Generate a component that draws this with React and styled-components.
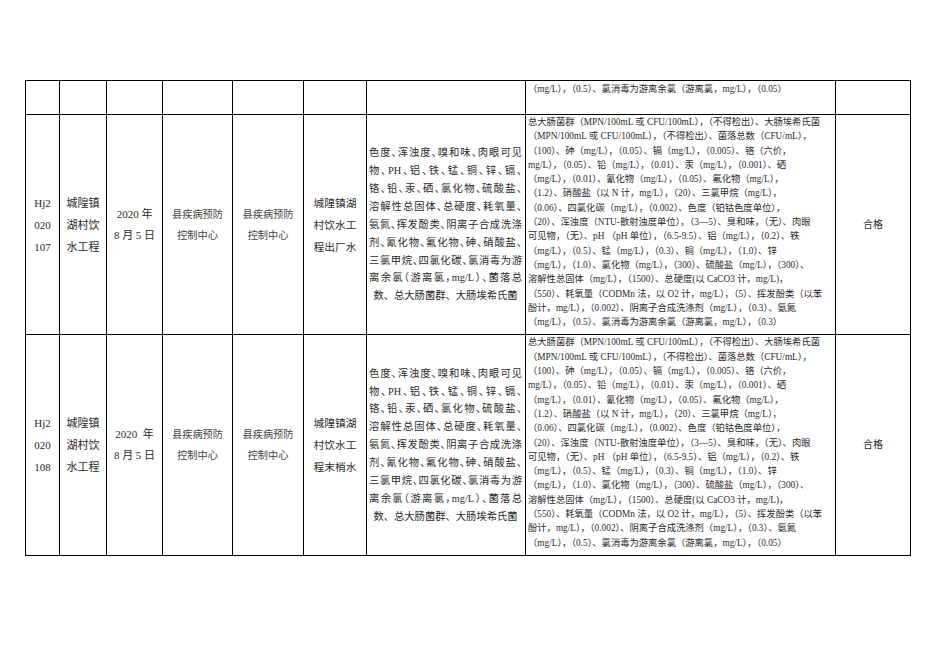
import React from 'react';
import styled, { createGlobalStyle } from 'styled-components';

const GlobalStyle = createGlobalStyle`
  html, body {
    margin: 0;
    background: #fff;
  }
  body {
    font-family: "Liberation Serif", "Noto Sans CJK SC", serif;
    color: #2a2a2a;
  }
`;

const Page = styled.div`
  width: 936px;
  height: 662px;
  box-sizing: border-box;
  padding: 80px 0 0 25px;
  overflow: hidden;
`;

const Table = styled.table`
  border-collapse: collapse;
  table-layout: fixed;
  width: 886px;
`;

const Row = styled.tr`
  height: ${({ $h }) => $h}px;
`;

const Cell = styled.td`
  border: 1px solid #000;
  padding: 0 2px;
  vertical-align: ${({ $top }) => ($top ? 'top' : 'middle')};
  text-align: center;
  font-size: 11px;
  line-height: 22px;
  overflow: hidden;
`;

const ShortCell = styled(Cell)`
  line-height: 21px;
`;

const OrgCell = styled(Cell)`
  font-size: 10.2px;
  line-height: 21px;
  color: #444;
`;

const SiteCell = styled(Cell)`
  font-size: 10.7px;
  line-height: 22px;
`;

const ItemsCell = styled(Cell)`
  font-size: 10.3px;
  line-height: 17.9px;
  padding: 0 3px 0 2px;
`;

const LimitsCell = styled(Cell)`
  text-align: left;
  font-size: 9.3px;
  line-height: 14.3px;
  padding: ${({ $top }) => ($top ? '1px 2px 0' : '0 2px 5px')};
`;

const ResultCell = styled(Cell)`
  font-size: 10px;
`;

const Line = styled.span`
  display: block;
  white-space: nowrap;
`;

const ItemLine = styled.span`
  display: block;
  white-space: nowrap;
  font-feature-settings: ${({ $last }) => ($last ? 'normal' : '"halt" 1')};
  text-align: ${({ $last }) => ($last ? 'center' : 'justify')};
  text-align-last: ${({ $last }) => ($last ? 'center' : 'justify')};
  text-justify: inter-character;
`;

const items = [
  '色度、浑浊度、嗅和味、肉眼可见',
  '物、PH、铝、铁、锰、铜、锌、镉、',
  '铬、铅、汞、硒、氯化物、硫酸盐、',
  '溶解性总固体、总硬度、耗氧量、',
  '氨氮、挥发酚类、阴离子合成洗涤',
  '剂、氰化物、氟化物、砷、硝酸盐、',
  '三氯甲烷、四氯化碳、氯消毒为游',
  '离余氯（游离氯，mg/L）、菌落总',
  '数、总大肠菌群、大肠埃希氏菌',
];

const limits = (last) => [
  '总大肠菌群（MPN/100mL 或 CFU/100mL），（不得检出）、大肠埃希氏菌',
  '（MPN/100mL 或 CFU/100mL），（不得检出）、菌落总数（CFU/mL），',
  '（100）、砷（mg/L），（0.05）、镉（mg/L），（0.005）、铬（六价，',
  'mg/L），（0.05）、铅（mg/L），（0.01）、汞（mg/L），（0.001）、硒',
  '（mg/L），（0.01）、氰化物（mg/L），（0.05）、氟化物（mg/L），',
  '（1.2）、硝酸盐（以 N 计，mg/L），（20）、三氯甲烷（mg/L），',
  '（0.06）、四氯化碳（mg/L），（0.002）、色度（铂钴色度单位），',
  '（20）、浑浊度（NTU-散射浊度单位），（3—5）、臭和味，（无）、肉眼',
  '可见物，（无）、pH （pH 单位），（6.5-9.5）、铝（mg/L），（0.2）、铁',
  '（mg/L），（0.5）、锰（mg/L），（0.3）、铜（mg/L），（1.0）、锌',
  '（mg/L），（1.0）、氯化物（mg/L），（300）、硫酸盐（mg/L），（300）、',
  '溶解性总固体（mg/L），（1500）、总硬度(以 CaCO3 计，mg/L)，',
  '（550）、耗氧量（CODMn 法，以 O2 计，mg/L），（5）、挥发酚类（以苯',
  '酚计，mg/L），（0.002）、阴离子合成洗涤剂（mg/L），（0.3）、氨氮',
  `（mg/L），（0.5）、氯消毒为游离余氯（游离氯，mg/L），（${last}）`,
];

const records = [
  {
    code: ['Hj2', '020', '107'],
    date: ['2020 年', '8 月 5 日'],
    site: ['城隍镇湖', '村饮水工', '程出厂水'],
    last: '0.3',
    height: 218,
  },
  {
    code: ['Hj2', '020', '108'],
    date: ['2020\u00a0\u00a0年', '8 月 5 日'],
    site: ['城隍镇湖', '村饮水工', '程末梢水'],
    last: '0.05',
    height: 220,
  },
];

const cols = [34, 47, 56, 70, 71, 63, 159, 310, 75];

const Lines = ({ list }) => list.map((t, i) => <Line key={i}>{t}</Line>);

const Items = () =>
  items.map((t, i) => (
    <ItemLine key={i} $last={i === items.length - 1}>
      {t}
    </ItemLine>
  ));

export default function App() {
  return (
    <Page>
      <GlobalStyle />
      <Table>
        <colgroup>
          {cols.map((w, i) => (
            <col key={i} style={{ width: w }} />
          ))}
        </colgroup>
        <tbody>
          <Row $h={34}>
            <Cell />
            <Cell />
            <Cell />
            <Cell />
            <Cell />
            <Cell />
            <Cell />
            <LimitsCell $top>
              <Line>（mg/L），（0.5）、氯消毒为游离余氯（游离氯，mg/L），（0.05）</Line>
            </LimitsCell>
            <Cell />
          </Row>
          {records.map((r) => (
            <Row key={r.code[2]} $h={r.height}>
              <Cell><Lines list={r.code} /></Cell>
              <Cell><Lines list={['城隍镇', '湖村饮', '水工程']} /></Cell>
              <ShortCell><Lines list={r.date} /></ShortCell>
              <OrgCell><Lines list={['县疾病预防', '控制中心']} /></OrgCell>
              <OrgCell><Lines list={['县疾病预防', '控制中心']} /></OrgCell>
              <SiteCell><Lines list={r.site} /></SiteCell>
              <ItemsCell><Items /></ItemsCell>
              <LimitsCell><Lines list={limits(r.last)} /></LimitsCell>
              <ResultCell>合格</ResultCell>
            </Row>
          ))}
        </tbody>
      </Table>
    </Page>
  );
}
